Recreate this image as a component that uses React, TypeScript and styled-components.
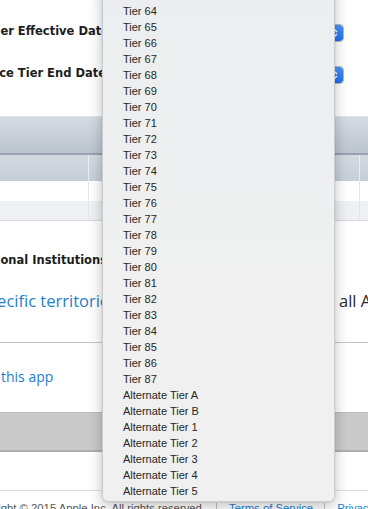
import React from 'react'
import styled, { createGlobalStyle } from 'styled-components'

const GlobalStyle = createGlobalStyle`
  html, body {
    margin: 0;
    padding: 0;
    background: #fff;
    overflow: hidden;
  }
  * { box-sizing: border-box; }
`

const Page = styled.div`
  position: relative;
  width: 368px;
  height: 509px;
  overflow: hidden;
  font-family: 'DejaVu Sans', sans-serif;
  color: #1f1f1f;
`

const Form = styled.div`
  padding-top: 12px;
  display: flex;
  flex-direction: column;
`

const FormRow = styled.div`
  display: flex;
  align-items: center;
  justify-content: space-between;
  height: 42px;
  padding-right: 24px;
`

// right aligned label, the start of it runs off the left edge of the window
const Label = styled.div<{ $w: number; $lift?: boolean }>`
  width: ${(p) => p.$w}px;
  flex-shrink: 0;
  display: flex;
  justify-content: flex-end;
  white-space: nowrap;
  font: bold 11.5px 'DejaVu Sans', sans-serif;
  color: #1d1d1d;
  padding-bottom: ${(p) => (p.$lift ? 5 : 0)}px;
  span { flex-shrink: 0; }
`

const Select = styled.div`
  display: flex;
  width: 150px;
  height: 18px;
  border: 1px solid #b9b9b9;
  border-radius: 4px;
  background: #fff;
  justify-content: flex-end;
  overflow: hidden;
`

const SelectCap = styled.div`
  width: 17px;
  height: 100%;
  display: flex;
  align-items: center;
  justify-content: center;
  background: linear-gradient(#4c95f8, #1c6ef1);
  border-radius: 0 3px 3px 0;
`

const Table = styled.div`
  margin-top: 20px;
  border-top: 1px solid #e0e4e9;
`

const Band = styled.div`
  height: 38px;
  background: linear-gradient(#d5dbe3, #bcc4cf);
  border-bottom: 2px solid #98a1ae;
`

const Grid = styled.div`
  display: grid;
  grid-template-columns: 89px 271px 1fr;
  border-bottom: 1px solid #d6dadf;
`

const Cell = styled.div<{ $kind: 'head' | 'odd' | 'even' }>`
  height: ${(p) => (p.$kind === 'head' ? 26 : p.$kind === 'odd' ? 20 : 19)}px;
  background: ${(p) =>
    p.$kind === 'head'
      ? 'linear-gradient(#d4dae2, #c6ced8)'
      : p.$kind === 'odd'
        ? '#fff'
        : '#eef0f3'};
  border-right: 1px solid ${(p) => (p.$kind === 'head' ? '#e9edf1' : '#e4e6ea')};
  &:nth-child(3n) { border-right: none; }
`

const LabelRow = styled.div`
  margin-top: 29px;
  height: 20px;
  display: flex;
  align-items: center;
`

const TerritoryRow = styled.div`
  margin-top: 18px;
  height: 24px;
  display: flex;
  align-items: center;
  white-space: nowrap;
  font: 16.5px 'Open Sans', sans-serif;
`

const LinkBox = styled.div<{ $w: number }>`
  width: ${(p) => p.$w}px;
  flex-shrink: 0;
  display: flex;
  justify-content: flex-end;
  color: #1b80d0;
  span { flex-shrink: 0; }
`

const Plain = styled.span`
  margin-left: 222px;
  color: #2a2a2a;
  flex-shrink: 0;
`

const Rule = styled.div`
  margin-top: 30px;
  height: 1px;
  background: #c4c4c4;
`

const AppLink = styled.div`
  margin-top: 24px;
  height: 20px;
  font: 14px/20px 'Open Sans', sans-serif;
  color: #1b80d0;
  padding-left: 1px;
`

const GreyBar = styled.div`
  margin-top: 25px;
  height: 40px;
  background: #cacaca;
  border-top: 1px solid #bcbcbc;
  border-bottom: 2px solid #afafaf;
`

const Footer = styled.div`
  margin-top: 38px;
  border-top: 1px solid #dcdcdc;
  padding-top: 10px;
  display: flex;
  align-items: flex-start;
  white-space: nowrap;
  font: 11.3px/14px 'Liberation Sans', Arial, sans-serif;
  color: #555;
`

const Copy = styled.div`
  width: 205px;
  flex-shrink: 0;
  display: flex;
  justify-content: flex-end;
  span { flex-shrink: 0; }
`

const Sep = styled.div`
  width: 1px;
  height: 16px;
  margin: 2px 12px 0 11px;
  background: #c2c2c2;
  flex-shrink: 0;
`

const FootLink = styled.span`
  color: #1b80d0;
  flex-shrink: 0;
`

const Menu = styled.div`
  position: absolute;
  left: 102px;
  top: -18px;
  width: 233px;
  padding: 4px 0 2px;
  border: 1px solid rgba(0, 0, 0, 0.14);
  border-radius: 6px;
  background: linear-gradient(#ebeef0 0%, #edeff0 35%, #f0f0f0 60%, #f0f0f0 100%);
  box-shadow: 0 4px 14px rgba(0, 0, 0, 0.25), 0 0 1px rgba(0, 0, 0, 0.3);
`

const Item = styled.div`
  height: 16px;
  padding-left: 20px;
  font: 11px/16px 'Liberation Sans', Arial, sans-serif;
  color: #262626;
  white-space: nowrap;
`

const Chevrons = () => (
  <svg width="9" height="12" viewBox="0 0 9 12">
    <path d="M2 5 L4.5 2.5 L7 5 M2 7 L4.5 9.5 L7 7" fill="none" stroke="#fff" strokeWidth="1.5" />
  </svg>
)

const PriceSelect = () => (
  <Select>
    <SelectCap>
      <Chevrons />
    </SelectCap>
  </Select>
)

const tiers = [
  ...Array.from({ length: 25 }, (_, i) => `Tier ${63 + i}`),
  'Alternate Tier A',
  'Alternate Tier B',
  'Alternate Tier 1',
  'Alternate Tier 2',
  'Alternate Tier 3',
  'Alternate Tier 4',
  'Alternate Tier 5',
]

const App: React.FC = () => (
  <>
    <GlobalStyle />
    <Page>
      <Form>
        <FormRow>
          <Label $w={109} $lift><span>Price Tier Effective Date</span></Label>
          <PriceSelect />
        </FormRow>
        <FormRow>
          <Label $w={106} $lift><span>Price Tier End Date</span></Label>
          <PriceSelect />
        </FormRow>
      </Form>

      <Table>
        <Band />
        <Grid>
          <Cell $kind="head" />
          <Cell $kind="head" />
          <Cell $kind="head" />
          <Cell $kind="odd" />
          <Cell $kind="odd" />
          <Cell $kind="odd" />
          <Cell $kind="even" />
          <Cell $kind="even" />
          <Cell $kind="even" />
        </Grid>
      </Table>

      <LabelRow>
        <Label $w={107}><span>Educational Institutions</span></Label>
      </LabelRow>

      <TerritoryRow>
        <LinkBox $w={117}><span>Specific territories</span></LinkBox>
        <Plain>all App Store territories</Plain>
      </TerritoryRow>

      <Rule />

      <AppLink>this app</AppLink>

      <GreyBar />

      <Footer>
        <Copy><span>Copyright © 2015 Apple Inc. All rights reserved.</span></Copy>
        <Sep />
        <FootLink>Terms of Service</FootLink>
        <Sep />
        <FootLink>Privacy Policy</FootLink>
      </Footer>

      <Menu>
        {tiers.map((t) => (
          <Item key={t}>{t}</Item>
        ))}
      </Menu>
    </Page>
  </>
)

export default App
